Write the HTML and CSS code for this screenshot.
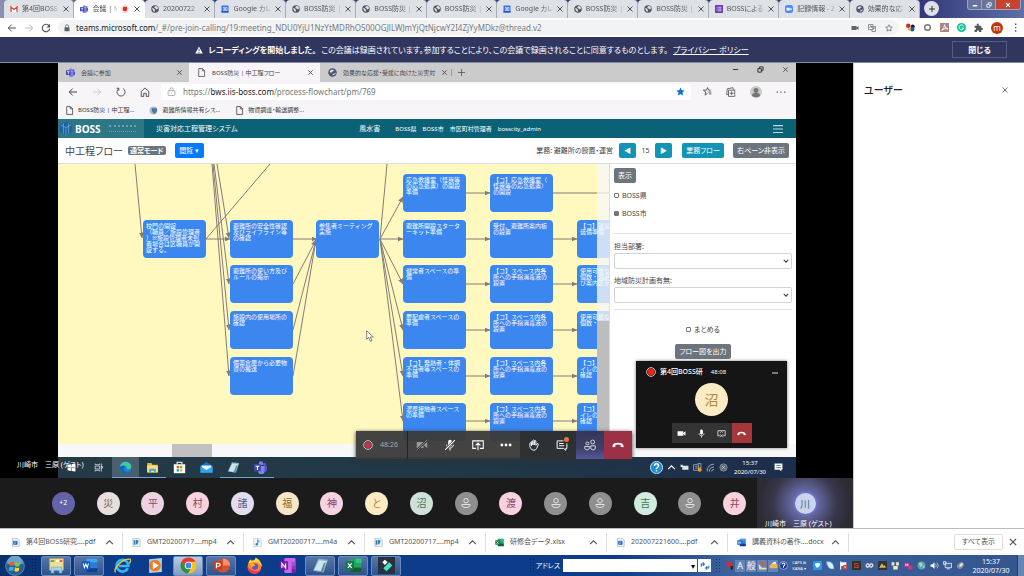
FILE: index.html
```html
<!DOCTYPE html>
<html lang="ja">
<head>
<meta charset="utf-8">
<title>会議 | Microsoft Teams</title>
<link rel="stylesheet" href="styles.css">
</head>
<body>
<svg class="defs" aria-hidden="true">
  <symbol id="x" viewBox="0 0 8 8"><path d="M1.500 1.500l5 5m0-5l-5 5" stroke="currentColor" fill="none"/></symbol>
  <symbol id="globe" viewBox="0 0 16 16"><circle cx="8" cy="8" r="7.500" fill="#54585d"/><path d="M2 6l4 1 2 3-1 4-3-3zM9 2l4 1 1 4-3 2-3-3-2-1z" fill="#dee1e6"/></symbol>
  <symbol id="gmail" viewBox="0 0 16 16"><path fill="#fff" d="M1 3h14v11H1z"/><path d="M2 14V4l6 5 6-5v10" fill="none" stroke="#d5473c" stroke-width="2.600"/></symbol>
  <symbol id="teams" viewBox="0 0 16 16"><circle cx="13" cy="4" r="2" fill="#5059c9"/><circle cx="8.500" cy="3" r="2.600" fill="#7b83eb"/><path d="M11 6h5v5a3 3 0 0 1-4 2z" fill="#5059c9"/><path d="M5 6h8v6a4 4 0 0 1-8 1z" fill="#7b83eb"/><rect y="4" width="8.500" height="8.500" rx="1" fill="#4349a8"/><path d="M2 6.500h4.500M4.250 6.500v4.500" stroke="#fff" stroke-width="1.300"/></symbol>
  <symbol id="cal" viewBox="0 0 16 16"><rect x="1" y="1" width="14" height="14" fill="#3b73e0"/><path d="M1 12h14v3H1z" fill="#1d57c5"/><path d="M4 5h3v6H4m0-3h3M9 5h3v6H9z" stroke="#fff" fill="none" stroke-width="1.200"/></symbol>
  <symbol id="form" viewBox="0 0 16 16"><rect width="16" height="16" rx="1.500" fill="#673ab7"/><path d="M3 4.500h2M3 8h2M3 11.500h2M6.500 4.500H13M6.500 8H13M6.500 11.500H13" stroke="#fff" stroke-width="1.500"/></symbol>
  <symbol id="zoom" viewBox="0 0 16 16"><rect width="16" height="16" rx="5" fill="#4a8cff"/><path d="M3 5.500h6.500V11H3zM10 7.500l3-2V11l-3-2z" fill="#fff"/></symbol>
  <symbol id="planet" viewBox="0 0 16 16"><circle cx="8" cy="8" r="7.500" fill="#4d556f"/><path d="M3 6c3-4 6-3 9-2-2 1-4 1-5 4-2 0-3 0-4-2zM8 11c2 0 4-2 6-3-1 3-3 5-6 5z" fill="#e4e7ef"/></symbol>
  <symbol id="rec" viewBox="0 0 16 16"><circle cx="8" cy="8" r="7" fill="none" stroke="#efa19b"/><circle cx="8" cy="8" r="4.800" fill="#d93025"/></symbol>
  <symbol id="back" viewBox="0 0 16 16"><path d="M14.500 8H2m5.500-5.500L2 8l5.500 5.500" fill="none" stroke="currentColor" stroke-width="1.600"/></symbol>
  <symbol id="fwd" viewBox="0 0 16 16"><path d="M1.500 8H14M8.500 2.500L14 8l-5.500 5.500" fill="none" stroke="currentColor" stroke-width="1.600"/></symbol>
  <symbol id="reload" viewBox="0 0 16 16"><path d="M13 4.500A6 6 0 1 0 14 9" fill="none" stroke="currentColor" stroke-width="1.800"/><path d="M14.500 1v6h-6z" fill="currentColor"/></symbol>
  <symbol id="lock" viewBox="0 0 16 16"><rect x="3" y="6.500" width="10" height="8" rx="1" fill="currentColor"/><path d="M5 7V4.500a3 3 0 0 1 6 0V7" fill="none" stroke="currentColor" stroke-width="1.600"/></symbol>
  <symbol id="lockline" viewBox="0 0 16 16"><rect x="2" y="6.500" width="12" height="8.500" rx="1" fill="none" stroke="currentColor"/><path d="M5 6.500V4.500a3 3 0 0 1 6 0v2M8 10v1.500" fill="none" stroke="currentColor"/></symbol>
  <symbol id="cam" viewBox="0 0 16 16"><path d="M1 4h10v8H1zM11 7l4-3v8l-4-3z" fill="currentColor"/></symbol>
  <symbol id="camoff" viewBox="0 0 16 16"><path d="M1 4h9v8H1zM11 7l4-3v8l-4-3z" fill="currentColor"/><path d="M1 15L15 1" stroke="#3b3b3b" stroke-width="3"/><path d="M1 15L15 1" stroke="currentColor"/></symbol>
  <symbol id="mic" viewBox="0 0 16 16"><rect x="5.500" y="1" width="5" height="9" rx="2.500" fill="currentColor"/><path d="M3.500 7.500c0 6 9 6 9 0M8 12v3.500" fill="none" stroke="currentColor" stroke-width="1.200"/></symbol>
  <symbol id="micoff" viewBox="0 0 16 16"><rect x="5.500" y="1" width="5" height="9" rx="2.500" fill="currentColor"/><path d="M3.500 7.500c0 6 9 6 9 0M8 12v3.500" fill="none" stroke="currentColor" stroke-width="1.200"/><path d="M1.500 14.500l13-13" stroke="#3b3b3b" stroke-width="3"/><path d="M1.500 14.500l13-13" stroke="currentColor" stroke-width="1.400"/></symbol>
  <symbol id="share" viewBox="0 0 16 16"><path d="M5.500 12.500H1v-10h14v10h-4.500M8 15V6M4.800 8.500L8 5.300l3.200 3.200" fill="none" stroke="currentColor" stroke-width="1.400"/></symbol>
  <symbol id="unshare" viewBox="0 0 16 16"><path d="M5 12H1.500V3h13v9H11M5.500 9.500l5 5m0-5l-5 5M6 6.500l2-2 2 2" fill="none" stroke="currentColor" stroke-width="1.300"/></symbol>
  <symbol id="more" viewBox="0 0 16 16"><circle cx="2.500" cy="8" r="1.900" fill="currentColor"/><circle cx="8" cy="8" r="1.900" fill="currentColor"/><circle cx="13.500" cy="8" r="1.900" fill="currentColor"/></symbol>
  <symbol id="hand" viewBox="0 0 16 16"><path d="M4.500 9V3.500q1-1.300 2 0V8 2q1-1.300 2 0v6-5.500q1-1.300 2 0V8.500l1.500-2q1.500-1 2 .5l-2.500 5.500Q10.500 15 8 15q-4 0-5.500-4.500V5.500q1-1.200 2 0z" fill="none" stroke="currentColor" stroke-width="1.200"/></symbol>
  <symbol id="chat" viewBox="0 0 16 16"><path d="M14.500 6v6.500H13V15l-3-2.500H1.500v-10H10M4 6h6M4 9h7" fill="none" stroke="currentColor" stroke-width="1.300"/></symbol>
  <symbol id="people" viewBox="0 0 16 16"><circle cx="4.500" cy="6" r="2" fill="none" stroke="currentColor"/><circle cx="11.500" cy="4" r="2.600" fill="none" stroke="currentColor"/><path d="M1 10h6v3q-3 3.500-6 0zM9 9h6v4q-3 3.500-6 0z" fill="none" stroke="currentColor"/></symbol>
  <symbol id="hang" viewBox="0 0 16 16"><path d="M.5 9.500Q1 5 8 5t7.500 4.500q0 1.500-1 1.500l-3-.8V8q-3.500-1.200-7 0v2.200l-3 .8q-1 0-1-1.500z" fill="currentColor"/></symbol>
  <symbol id="user" viewBox="0 0 16 16"><circle cx="8" cy="5" r="3" fill="none" stroke="currentColor" stroke-width="1.300"/><path d="M2.500 10h11q0 4-5.500 4t-5.500-4z" fill="none" stroke="currentColor" stroke-width="1.300"/></symbol>
  <symbol id="file" viewBox="0 0 16 16"><path d="M3 1h6.500L13.500 5v10H3zM9.500 1v4h4" fill="none" stroke="currentColor" stroke-width="1.300"/></symbol>
  <symbol id="star" viewBox="0 0 16 16"><path d="M8 .8l2.200 4.900 5.300.5-4 3.600 1.200 5.300L8 12.300l-4.700 2.800 1.200-5.300-4-3.600 5.300-.5z" fill="currentColor"/></symbol>
  <symbol id="starline" viewBox="0 0 16 16"><path d="M8 1.500l1.900 4.300 4.700.5-3.500 3.200 1 4.600L8 11.700l-4.100 2.400 1-4.600-3.500-3.200 4.700-.5z" fill="none" stroke="currentColor" stroke-width="1.400"/></symbol>
  <symbol id="up" viewBox="0 0 8 8"><path d="M1 5.500l3-3 3 3" fill="none" stroke="currentColor"/></symbol>
  <symbol id="down" viewBox="0 0 8 8"><path d="M1 2.500l3 3 3-3" fill="none" stroke="currentColor" stroke-width="1.500"/></symbol>
  <symbol id="doc" viewBox="0 0 16 16"><path d="M2.500.5H11L14.500 4v11.500h-12z" fill="#f3f8fc" stroke="#8a9bab"/><rect x="4" y="5" width="7.500" height="7" fill="#185abd"/><path d="M5.500 7h4.500M5.500 9.500h3" stroke="#fff"/></symbol>
  <symbol id="video" viewBox="0 0 16 16"><path d="M1.500.5H12L14.500 3v12.500h-13z" fill="#e9f2f9" stroke="#8fa9bd"/><path d="M3 4h3v8H3zM7 3l5 2-3 7-2-2z" fill="#3479a7"/></symbol>
  <symbol id="audio" viewBox="0 0 16 16"><path d="M1.500.5H12L14.500 3v12.500h-13z" fill="#f4f8fc" stroke="#9fb3c3"/><path d="M8.500 3v7.500M8.500 3q0 2.500 3 3.500" stroke="#1687d9" stroke-width="1.600" fill="none"/><circle cx="6.700" cy="11" r="2.200" fill="#1687d9"/></symbol>
  <symbol id="word" viewBox="0 0 32 32"><rect x="10" y="3" width="21" height="26" rx="2" fill="#2b7cd3"/><path d="M10 3h21v7H10z" fill="#41a5ee"/><path d="M10 21h21v8H10z" fill="#103f91"/><rect x="1" y="8" width="16" height="16" rx="1.500" fill="#185abd"/><path d="M4 12l2.300 8L9 13l2.700 7L14 12" fill="none" stroke="#fff" stroke-width="2"/></symbol>
  <symbol id="excel" viewBox="0 0 32 32"><rect x="10" y="3" width="21" height="26" rx="2" fill="#21a366"/><path d="M20 3h11v8H20z" fill="#33c481"/><path d="M10 20h21v9H10z" fill="#185c37"/><rect x="1" y="8" width="16" height="16" rx="1.500" fill="#107c41"/><path d="M5.500 12l7 8.500m0-8.500l-7 8.500" fill="none" stroke="#fff" stroke-width="2.200"/></symbol>
  <symbol id="ppt" viewBox="0 0 32 32"><circle cx="19" cy="16" r="13" fill="#d35230"/><path d="M19 3a13 13 0 0 1 13 13H19z" fill="#ff8f6b"/><rect x="1" y="8" width="16" height="16" rx="1.500" fill="#c43e1c"/><path d="M6.500 21v-9h4q3 0 3 2.700t-3 2.700h-4" fill="none" stroke="#fff" stroke-width="2.200"/></symbol>
  <symbol id="onenote" viewBox="0 0 32 32"><rect x="10" y="2" width="21" height="28" rx="2" fill="#ca64ea"/><path d="M24 9h7v7h-7z" fill="#ae4bd5"/><path d="M24 16h7v7h-7z" fill="#9332bf"/><path d="M24 23h7v7h-7z" fill="#7719aa"/><rect x="1" y="8" width="16" height="16" rx="1.500" fill="#7719aa"/><path d="M5.500 20.500V12l7 8.500V12" fill="none" stroke="#fff" stroke-width="2.200"/></symbol>
  <symbol id="notepad" viewBox="0 0 32 32"><path d="M12 3l18 2-8 24L2 26z" fill="#7fb2c3"/><path d="M13 6l15 1.500L20 27 4 24.500z" fill="#c9e6ee"/><path d="M22 12l4-3-5 18-5 1z" fill="#5f8795"/></symbol>
  <symbol id="folder" viewBox="0 0 32 32"><path d="M3 5h10l3 4h13v19H3z" fill="#e8b648"/><path d="M3 11h26v17H3z" fill="#ffdf7e"/><path d="M8 28v-9h16v9h-4v-4h-8v4z" fill="#4aa0dc"/></symbol>
  <symbol id="explorer7" viewBox="0 0 32 32"><path d="M3 3h26v22H3z" fill="#f1dc91" stroke="#cdaa4d"/><path d="M5 6h7v3H5z" fill="#37a44c"/><path d="M15 6h6v3h-6z" fill="#fff"/><path d="M22 6h5v3h-5z" fill="#d54a3d"/><path d="M6 30V19h20v11h-5v-5H11v5z" fill="#9ed5ef" stroke="#5aa4ca"/></symbol>
  <symbol id="chrome" viewBox="0 0 32 32"><circle cx="16" cy="16" r="15" fill="#fbc116"/><path d="M3 8.500A15 15 0 0 1 29.500 9H16l-6 10z" fill="#e33b2e"/><path d="M3 8.500A15 15 0 0 0 15 31l7-12-12 0z" fill="#229342"/><circle cx="16" cy="16" r="7" fill="#fff"/><circle cx="16" cy="16" r="5.500" fill="#4285f4"/></symbol>
  <symbol id="ie" viewBox="0 0 32 32"><path d="M26 21a11 11 0 1 1 1-4H9" fill="none" stroke="#35b4ee" stroke-width="5"/><path d="M3 29C-2 22 15 3 30 4q3 2-1 8" fill="none" stroke="#f6c632" stroke-width="2.500"/></symbol>
  <symbol id="wmp" viewBox="0 0 32 32"><path d="M4 4l24-2v26l-24 2z" fill="#a9d3ea"/><circle cx="15" cy="16" r="11" fill="#ef7b22"/><path d="M11 9l11 7-11 7z" fill="#fff"/></symbol>
  <symbol id="firefox" viewBox="0 0 32 32"><circle cx="16" cy="18" r="13" fill="#ff8a16"/><path d="M4 12q3-6 4-8 2 4 5 4 5-3 5-7 12 6 12 18-5-10-14-9z" fill="#ffd23c"/><path d="M3 18a13 13 0 0 0 26 2q-4 7-12 6Q7 25 3 18z" fill="#f5365c"/><circle cx="17" cy="18" r="6" fill="#6b4bd6"/><path d="M8 13q6-3 10 3-4 1-8 4z" fill="#ffab1f"/></symbol>
  <symbol id="filmora" viewBox="0 0 32 32"><rect width="32" height="32" fill="#26323f"/><path d="M8 10l5-5 5 5-5 5z" fill="#fff"/><path d="M10 21L21 10l6 6-11 11z" fill="#4fe0c1"/></symbol>
  <symbol id="edge" viewBox="0 0 32 32"><circle cx="16" cy="16" r="14.500" fill="#1683d1"/><path d="M2 15C4 4 14 0 22 3q9 4 8.500 12-1 6-8 6-5 0-4-4 1-5-5-5-7 0-11.500 3z" fill="#43c7a0"/><path d="M2 15q6-6 13-3-5 3-4 9 2 7 13 7Q14 34 6 26q-4-5-4-11z" fill="#0e63b5"/></symbol>
  <symbol id="store" viewBox="0 0 32 32"><path d="M2 8h28v22H2z" fill="#fff"/><path d="M10 8V3h12v5" fill="none" stroke="#fff" stroke-width="2.500"/><path d="M9 12h6v6H9z" fill="#f25022"/><path d="M17 12h6v6h-6z" fill="#7fba00"/><path d="M9 20h6v6H9z" fill="#00a4ef"/><path d="M17 20h6v6h-6z" fill="#ffb900"/></symbol>
  <symbol id="mail" viewBox="0 0 32 32"><path d="M1 12L16 2l15 10v17H1z" fill="#1272c4"/><path d="M4 11h24v8l-12 4-12-4z" fill="#e9f5fd"/><path d="M1 13l15 9 15-9v16H1z" fill="#2fa6ea"/></symbol>
  <symbol id="win" viewBox="0 0 16 16"><path d="M1 3l6-1v5.500H1zM8 2l7-1v6.500H8zM1 8.500h6V14l-6-1zM8 8.500h7V15l-7-1z" fill="currentColor"/></symbol>
  <symbol id="tasks" viewBox="0 0 16 16"><path d="M2 1v2h8V1M2 15v-2h8v2M2 5.500h8v5H2zM13 1v14M13 6h2v3h-2" fill="none" stroke="currentColor" stroke-width="1.200"/></symbol>
</svg>

<header class="tabstrip">
  <nav class="tabs" aria-label="タブ">
    <div class="tab"><svg><use href="#gmail"/></svg><span>第4回BOSS</span><button aria-label="閉じる"><svg><use href="#x"/></svg></button></div>
    <div class="tab tab-on"><svg><use href="#teams"/></svg><span>会議 | M</span><svg><use href="#rec"/></svg><button aria-label="閉じる"><svg><use href="#x"/></svg></button></div>
    <div class="tab"><svg><use href="#globe"/></svg><span>20200722</span><button aria-label="閉じる"><svg><use href="#x"/></svg></button></div>
    <div class="tab"><svg><use href="#cal"/></svg><span>Google カレ</span><button aria-label="閉じる"><svg><use href="#x"/></svg></button></div>
    <div class="tab"><svg><use href="#globe"/></svg><span>BOSS防災 |</span><button aria-label="閉じる"><svg><use href="#x"/></svg></button></div>
    <div class="tab"><svg><use href="#globe"/></svg><span>BOSS防災 |</span><button aria-label="閉じる"><svg><use href="#x"/></svg></button></div>
    <div class="tab"><svg><use href="#globe"/></svg><span>BOSS防災 |</span><button aria-label="閉じる"><svg><use href="#x"/></svg></button></div>
    <div class="tab"><svg><use href="#cal"/></svg><span>Google カレ</span><button aria-label="閉じる"><svg><use href="#x"/></svg></button></div>
    <div class="tab"><svg><use href="#globe"/></svg><span>BOSS防災 |</span><button aria-label="閉じる"><svg><use href="#x"/></svg></button></div>
    <div class="tab"><svg><use href="#globe"/></svg><span>BOSS防災 |</span><button aria-label="閉じる"><svg><use href="#x"/></svg></button></div>
    <div class="tab"><svg><use href="#form"/></svg><span>BOSSによる</span><button aria-label="閉じる"><svg><use href="#x"/></svg></button></div>
    <div class="tab"><svg><use href="#zoom"/></svg><span>記録情報 - Z</span><button aria-label="閉じる"><svg><use href="#x"/></svg></button></div>
    <div class="tab"><svg><use href="#planet"/></svg><span>効果的な応</span><button aria-label="閉じる"><svg><use href="#x"/></svg></button></div>
  </nav>
  <button class="newtab" aria-label="新しいタブ"><svg viewBox="0 0 8 8"><path d="M4 1v6M1 4h6" stroke="#333"/></svg></button>
  <div class="winctl">
    <button aria-label="最小化"><svg viewBox="0 0 8 8"><path d="M1 5h6" stroke="#fff" stroke-width="2"/></svg></button>
    <button aria-label="元に戻す"><svg viewBox="0 0 8 8"><path d="M1 3h4v4H1zM3 3V1h4v4H5" fill="none" stroke="#fff"/></svg></button>
    <button class="winclose" aria-label="閉じる"><svg viewBox="0 0 8 8"><path d="M1.500 1.500l5 5m0-5l-5 5" stroke="#fff" stroke-width="1.600"/></svg></button>
  </div>
</header>

<div class="toolbar">
  <button aria-label="戻る"><svg><use href="#back"/></svg></button>
  <button class="dim" aria-label="進む"><svg><use href="#fwd"/></svg></button>
  <button aria-label="再読み込み"><svg><use href="#reload"/></svg></button>
  <div class="omnibox">
    <svg><use href="#lock"/></svg>
    <a class="url" href="#"><b>teams.microsoft.com</b>/_#/pre-join-calling/19:meeting_NDU0YjU1NzYtMDRhOS00OGJlLWJmYjQtNjcwY2I4ZjYyMDkz@thread.v2</a>
    <div class="acts">
      <svg><use href="#cam"/></svg>
      <svg viewBox="0 0 16 16"><path d="M1 1h9v10H1zM6 5h9v10H8l-2-3M3 8l2.500-5L8 8M9 8h5m-2.500 0q0 3-3 4" fill="none" stroke="#666" stroke-width="1.300"/></svg>
      <svg><use href="#starline"/></svg>
    </div>
  </div>
  <div class="exts">
    <svg viewBox="0 0 16 16"><circle cx="4" cy="5" r="4" fill="#cc2e24"/><circle cx="12" cy="6" r="3.500" fill="#222"/><circle cx="11" cy="11" r="4" fill="#2358a6"/><circle cx="6" cy="11" r="2.500" fill="#e8b32c"/></svg>
    <svg viewBox="0 0 16 16"><circle cx="8" cy="8" r="5" fill="#fff" stroke="#777" stroke-width="2.500"/></svg>
    <svg viewBox="0 0 16 16"><rect width="16" height="16" fill="#a98583"/><path d="M3 13Q8 9 8 3q1 7 6 7-6-1-11 3z" fill="none" stroke="#fff" stroke-width="1.500"/></svg>
    <svg viewBox="0 0 16 16"><circle cx="8" cy="8" r="8" fill="#15c39a"/><path d="M11.500 5.500A4.200 4.200 0 1 0 12 9H8.500" fill="none" stroke="#fff" stroke-width="1.700"/></svg>
    <svg viewBox="0 0 16 16"><path d="M1 5h4q-1-4 1.500-4T8.500 5H13v4q3-1 3 1.500T13 12v4H9q0-3-2-3t-2 3H1v-4q3 0 3-1.800T1 8.500z" fill="#54585d"/></svg>
    <span class="me">m</span>
    <svg viewBox="0 0 16 16"><path d="M7 1h2.500v2.500H7zM7 7h2.500v2.500H7zM7 13h2.500v2.500H7z" fill="#555"/></svg>
  </div>
</div>

<div class="notice">
  <p><svg viewBox="0 0 16 16"><path d="M8 1l7.500 14H.5z" fill="#fff"/><path d="M8 5.500v5m0 1.500v2" stroke="#30365e" stroke-width="1.700"/></svg><b>レコーディングを開始しました。</b> <span>この会議は録画されています。参加することにより、この会議で録画されることに同意するものとします。</span> <a href="#">プライバシー ポリシー</a></p>
  <button>閉じる</button>
</div>

<main class="main">
  <section class="meeting">
    <div class="stage">
      <div class="screen">
        <div class="etabs">
          <div class="etab"><svg><use href="#teams"/></svg><span>会議に参加</span><svg class="s7"><use href="#x"/></svg></div>
          <div class="etab etab-on"><svg><use href="#file"/></svg><span>BOSS防災 | 中工程フロー</span><svg class="s7"><use href="#x"/></svg></div>
          <div class="etab"><svg><use href="#planet"/></svg><span>効果的な応援・受援に向けた災害対</span><svg class="s7"><use href="#x"/></svg></div>
          <button class="eplus" aria-label="新しいタブ"><svg viewBox="0 0 8 8"><path d="M4 0v8M0 4h8" stroke="#444" stroke-width=".8"/></svg></button>
          <div class="ewin">
            <svg viewBox="0 0 8 8"><path d="M1 4h6" stroke="#222"/></svg>
            <svg viewBox="0 0 8 8"><path d="M1 3h4v4H1zM3 3V1h4v4H5" fill="none" stroke="#222"/></svg>
            <svg><use href="#x"/></svg>
          </div>
        </div>
        <div class="eaddr">
          <div class="enav">
            <svg><use href="#back"/></svg>
            <svg class="dim"><use href="#fwd"/></svg>
            <svg viewBox="0 0 16 16"><path d="M4.500 2.500a6.500 6.500 0 1 0 7 0M4.500 6V2H.8" fill="none" stroke="#444" stroke-width="1.400"/></svg>
            <svg viewBox="0 0 16 16"><path d="M2 7l6-5.500L14 7v8h-4v-5H6v5H2z" fill="none" stroke="#444" stroke-width="1.400"/></svg>
          </div>
          <div class="ebox"><svg><use href="#lockline"/></svg><span>https://<b>bws.iis-boss.com</b>/process-flowchart/pm/769</span><svg class="fav"><use href="#star"/></svg></div>
          <div class="eacts">
            <svg viewBox="0 0 16 16"><path d="M9 10l-4 3 1-5-4-3h5l2-4 1.500 4H14M10 8h5M11 11h4" fill="none" stroke="#444" stroke-width="1.300"/></svg>
            <svg viewBox="0 0 16 16"><path d="M4 5h10v10H4zM4 12H1l1-9 9-2 1 4M9 7v6M6 10h6" fill="none" stroke="#444" stroke-width="1.200"/></svg>
            <svg class="s12" viewBox="0 0 16 16"><circle cx="8" cy="8" r="8" fill="#c9c9c9"/><circle cx="8" cy="6" r="3.200" fill="#777"/><path d="M2.500 13q0-4 5.500-4t5.500 4q-5 4-11 0z" fill="#777"/></svg>
            <svg viewBox="0 0 16 16"><path d="M1 7h2v2H1zM7 7h2v2H7zM13 7h2v2h-2z" fill="#555"/></svg>
          </div>
        </div>
        <div class="ebook">
          <a href="#"><svg><use href="#file"/></svg>BOSS防災 | 中工程...</a>
          <a href="#"><svg viewBox="0 0 16 16"><circle cx="8" cy="8" r="7" fill="#b5bcc6"/><path d="M5 4h9v5q-2 4-5 5-3-3-4-5z" fill="#4978a8"/></svg>避難所情報共有シス...</a>
          <a href="#"><svg><use href="#file"/></svg>物資調達・輸送調整...</a>
        </div>

        <div class="bnav">
          <div class="logo"><svg viewBox="0 0 16 18"><path d="M1 4l7-3 7 3v9l-7 4-7-4z" fill="#235f9c"/><path d="M2 5l6 3 6-3M8 8v9M5 3v12M11 3v12" fill="none" stroke="#79b5dc" stroke-width=".8"/></svg><b>BOSS</b><i></i></div>
          <span class="sys">災害対応工程管理システム</span>
          <span class="dis">風水害</span>
          <span>BOSS県</span><span>BOSS市</span><span>市区町村管理者</span><span>bosscity_admin</span>
          <button aria-label="メニュー"><svg viewBox="0 0 16 16"><path d="M0 2.500h16M0 8h16M0 13.500h16" stroke="#b9dce2" stroke-width="1.800"/></svg></button>
        </div>
        <div class="bhead">
          <h1>中工程フロー</h1><span class="mode">通常モード</span><button class="btn blue">閲覧 ▾</button>
          <span class="task">業務: 避難所の設置・運営</span>
          <button class="btn teal sq" aria-label="前へ">◀</button><span class="num">15</span><button class="btn teal sq" aria-label="次へ">▶</button>
          <button class="btn teal flow">業務フロー</button><button class="btn grey">右ペーン非表示</button>
        </div>

        <div class="work">
          <div class="canvas">
            <svg class="edges" viewBox="0 0 552 281">
              <defs><marker id="a" viewBox="0 0 6 6" refX="5.500" refY="3" markerWidth="6" markerHeight="6" orient="auto"><path d="M0 .5L6 3 0 5.500z" fill="#857b76"/></marker></defs>
              <g class="arrows">
                <path d="M77 0L84 74"/><path d="M148 75H172"/>
                <path d="M159 0L171 74"/><path d="M156 0L171 120"/><path d="M155 0L171 166"/><path d="M154 0L171 212"/>
                <path d="M235 75H259"/><path d="M235 120L258 76"/><path d="M235 166L258 76"/><path d="M235 212L258 76"/>
                <path d="M322 75L345 33"/><path d="M322 75H345"/><path d="M322 75L345 120"/><path d="M322 75L345 166"/><path d="M322 75L345 212"/><path d="M322 75L345 257"/>
                <path d="M408 29H432"/><path d="M408 75H432"/><path d="M408 120H432"/><path d="M408 166H432"/><path d="M408 212H432"/><path d="M408 257H432"/>
                <path d="M495 75H519"/><path d="M495 120H519"/><path d="M495 166H519"/><path d="M495 212H519"/><path d="M495 257H519"/>
              </g>
              <path d="M148 75L212 0M322 75L329 0M495 29H552"/>
            </svg>
            <div class="node c1 r2">校門の開錠<br>（職員／施設管理者<br>）※施設管理者未到<br>着場合は区職員が開<br>錠する。</div>
            <div class="node c2 r2">避難所の安全性確認<br>及びライフライン等<br>の確認</div>
            <div class="node c2 r3">避難所の使い方及び<br>ルールの掲示</div>
            <div class="node c2 r4">施設内の使用場所の<br>確認</div>
            <div class="node c2 r5">備蓄倉庫から必要物<br>資の搬送</div>
            <div class="node c3 r2">参集者ミーティング<br>実施</div>
            <div class="node c4 r1">応急救護室（怪我等<br>の応急処置）の開設<br>準備</div>
            <div class="node c4 r2">避難所開設スタータ<br>ーキット準備</div>
            <div class="node c4 r3">健常者スペースの準<br>備</div>
            <div class="node c4 r4">要配慮者スペースの<br>準備</div>
            <div class="node c4 r5">【コ】発熱者・体調<br>不良者等スペースの<br>準備</div>
            <div class="node c4 r6">濃厚接触者スペース<br>の準備</div>
            <div class="node c5 r1">【コ】応急救護室（<br>怪我等の応急処置）<br>の開設</div>
            <div class="node c5 r2">受付、避難所案内板<br>の設置</div>
            <div class="node c5 r3">【コ】スペース内各<br>所への手指消毒液の<br>設置</div>
            <div class="node c5 r4">【コ】スペース内各<br>所への手指消毒液の<br>設置</div>
            <div class="node c5 r5">【コ】スペース内各<br>所への手指消毒液の<br>設置</div>
            <div class="node c5 r6">【コ】スペース内各<br>所への手指消毒液の<br>設置</div>
            <div class="node c6 r2">【コ】運営<br>装備準備</div>
            <div class="node c6 r3">使用可能な<br>個数・備品<br>び案内表示</div>
            <div class="node c6 r4">使用可能な<br>個数・</div>
            <div class="node c6 r5">【コ】<br>イレの<br>確認</div>
            <div class="node c6 r6">【コ】<br>イレの<br>確認</div>
            <div class="veil"></div>
            <svg class="cursor" viewBox="0 0 12 18"><path d="M1 1v13l3-3 2.500 6 2.500-1-2.500-5.500H11z" fill="#fff" stroke="#444"/></svg>
          </div>
          <aside class="pane">
            <button class="btn grey show">表示</button>
            <label class="chk"><input type="checkbox">BOSS県</label>
            <label class="chk"><input type="checkbox" checked>BOSS市</label>
            <hr>
            <label for="dept">担当部署:</label>
            <div class="pick"><select id="dept"><option></option></select><svg><use href="#down"/></svg></div>
            <label for="plan">地域防災計画有無:</label>
            <div class="pick"><select id="plan"><option></option></select><svg><use href="#down"/></svg></div>
            <hr class="last">
            <label class="chk sum"><input type="checkbox">まとめる</label>
            <button class="btn grey out">フロー図を出力</button>
          </aside>
        </div>
        <div class="hscroll"><i></i></div>

        <div class="bar10">
          <span class="app"><svg class="s9"><use href="#win"/></svg></span>
          <span class="app"><svg class="s9"><use href="#tasks"/></svg></span>
          <span class="app run lit"><svg><use href="#edge"/></svg></span>
          <span class="app run"><svg><use href="#folder"/></svg></span>
          <span class="app"><svg><use href="#store"/></svg></span>
          <span class="app"><svg><use href="#mail"/></svg></span>
          <span class="app run"><svg><use href="#notepad"/></svg></span>
          <span class="app run"><svg><use href="#teams"/></svg></span>
          <div class="tray10">
            <svg class="s12" viewBox="0 0 16 16"><circle cx="8" cy="8" r="7.500" fill="#1a8fd8" stroke="#e6f5fd"/><path d="M5.500 6q0-2.500 2.500-2.500T10.500 6Q10.500 7 8 9v1m0 1.500v1.500" fill="none" stroke="#fff" stroke-width="1.800"/></svg>
            <svg class="s7"><use href="#up"/></svg>
            <svg viewBox="0 0 16 16"><path d="M4 5h11v7H4zM1 3h4v4H1z" fill="#dfe5ea"/></svg>
            <svg viewBox="0 0 16 16"><path d="M1 3h9v10H1zM8 1h6v8H8M4 6h4M4 9h4" fill="none" stroke="#dfe5ea"/><circle cx="12" cy="12" r="3.500" fill="#f39a1e"/></svg>
            <svg viewBox="0 0 16 16"><path d="M2 15Q2 3 14 2M6 15q0-7 8-8M10 15q0-3 4-4" fill="none" stroke="#b8c2cc" stroke-width="1.500"/></svg>
            <svg viewBox="0 0 16 16"><circle cx="8" cy="8" r="6.500" fill="#56616e" stroke="#aab4bf"/><path d="M5 5l6 6m0-6l-6 6" stroke="#dde3e8" stroke-width="1.300"/></svg>
            <time>15:37<br>2020/07/30</time>
            <svg viewBox="0 0 16 16"><path d="M1 1h14v11h-2v3l-3-3H1z" fill="#f4f6f8"/><path d="M4 4.500h8M4 8h8" stroke="#25344d"/></svg>
          </div>
        </div>

        <div class="mini">
          <div class="mtitle"><svg viewBox="0 0 16 16"><circle cx="8" cy="8" r="7" fill="none" stroke="#fff" stroke-width="1.200"/><circle cx="8" cy="8" r="5.500" fill="#ee2410"/></svg><b>第4回BOSS研</b><span>48:08</span><button aria-label="最小化"><svg viewBox="0 0 8 8"><path d="M1 5h6" stroke="#ddd"/></svg></button></div>
          <span class="ava big sand">沼</span>
          <div class="mctl">
            <button aria-label="カメラ"><svg><use href="#cam"/></svg></button>
            <button aria-label="マイク"><svg><use href="#mic"/></svg></button>
            <button aria-label="共有停止"><svg><use href="#unshare"/></svg></button>
            <button class="red" aria-label="退出"><svg><use href="#hang"/></svg></button>
          </div>
        </div>
      </div>

      <span class="who">川崎市　三原 (ゲスト)</span>
      <div class="callbar">
        <span class="time"><svg viewBox="0 0 16 16"><circle cx="8" cy="8" r="7" fill="none" stroke="#ddd" stroke-width="1.300"/><circle cx="8" cy="8" r="5" fill="#c4314b"/></svg>48:26</span>
        <button class="off" aria-label="カメラ"><svg><use href="#camoff"/></svg></button>
        <button aria-label="マイク"><svg><use href="#micoff"/></svg></button>
        <button aria-label="共有"><svg><use href="#share"/></svg></button>
        <button aria-label="その他"><svg><use href="#more"/></svg></button>
        <button class="deep" aria-label="手を挙げる"><svg><use href="#hand"/></svg></button>
        <button class="deep dot" aria-label="チャット"><svg><use href="#chat"/></svg></button>
        <button class="sel" aria-label="参加者"><svg><use href="#people"/></svg></button>
        <button class="red" aria-label="退出"><svg><use href="#hang"/></svg></button>
      </div>
    </div>

    <div class="roster">
      <ul>
        <li><span class="ava plus">+2</span></li>
        <li><span class="ava stone">災</span></li>
        <li><span class="ava mauve">平</span></li>
        <li><span class="ava pink">村</span></li>
        <li><span class="ava lilac">諸</span></li>
        <li><span class="ava tan">福</span></li>
        <li><span class="ava pink">神</span></li>
        <li><span class="ava sand">と</span></li>
        <li><span class="ava sage">沼</span></li>
        <li><span class="ava anon"><svg><use href="#user"/></svg></span></li>
        <li><span class="ava pink">渡</span></li>
        <li><span class="ava anon"><svg><use href="#user"/></svg></span></li>
        <li><span class="ava anon"><svg><use href="#user"/></svg></span></li>
        <li><span class="ava mint">吉</span></li>
        <li><span class="ava anon"><svg><use href="#user"/></svg></span></li>
        <li><span class="ava pink">井</span></li>
      </ul>
      <div class="self"><span class="ava sky">川</span><span class="selfname">川崎市　三原 (ゲスト)</span></div>
    </div>
  </section>
  <aside class="users"><h2>ユーザー</h2><button aria-label="閉じる"><svg><use href="#x"/></svg></button></aside>
</main>

<div class="downloads">
  <a class="dl" href="#"><svg><use href="#doc"/></svg><span>第４回BOSS研究….pdf</span><svg class="s7"><use href="#up"/></svg></a>
  <a class="dl" href="#"><svg><use href="#video"/></svg><span>GMT20200717….mp4</span><svg class="s7"><use href="#up"/></svg></a>
  <a class="dl" href="#"><svg><use href="#audio"/></svg><span>GMT20200717….m4a</span><svg class="s7"><use href="#up"/></svg></a>
  <a class="dl" href="#"><svg><use href="#video"/></svg><span>GMT20200717….mp4</span><svg class="s7"><use href="#up"/></svg></a>
  <a class="dl" href="#"><svg><use href="#excel"/></svg><span>研修会データ.xlsx</span><svg class="s7"><use href="#up"/></svg></a>
  <a class="dl" href="#"><svg><use href="#doc"/></svg><span>202007221600….pdf</span><svg class="s7"><use href="#up"/></svg></a>
  <a class="dl" href="#"><svg><use href="#word"/></svg><span>講義資料の著作….docx</span><svg class="s7"><use href="#up"/></svg></a>
  <button class="all">すべて表示</button>
  <button class="dlx" aria-label="閉じる"><svg><use href="#x"/></svg></button>
</div>

<footer class="bar7">
  <button class="start" aria-label="スタート"><svg viewBox="0 0 32 32"><circle cx="16" cy="16" r="15" fill="#22608f" stroke="#7fb1cf"/><path d="M3 12a13 13 0 0 1 26 0q-13 5-26 0z" fill="#6ba3c7"/><path d="M8 10q4-2 7 0l-1 6q-3-2-7 0z" fill="#f0592b"/><path d="M17 10q4 2 7 0l-1 6q-4 2-7 0z" fill="#8cc63f"/><path d="M7 18q4-2 7 0l-1 6q-3-2-7 0z" fill="#3fa9f5"/><path d="M16 18q4 2 7 0l-1 6q-4 2-7 0z" fill="#fcd22f"/></svg></button>
  <i class="grip"></i>
  <div class="apps7">
    <span class="open"><svg><use href="#explorer7"/></svg></span>
    <span class="open"><svg><use href="#word"/></svg></span>
    <span><svg><use href="#ie"/></svg></span>
    <span><svg><use href="#wmp"/></svg></span>
    <span class="open now"><svg><use href="#chrome"/></svg></span>
    <span class="open"><svg><use href="#ppt"/></svg></span>
    <span><svg><use href="#firefox"/></svg></span>
    <span><svg><use href="#onenote"/></svg></span>
    <span class="open"><svg><use href="#notepad"/></svg></span>
    <span class="open"><svg><use href="#excel"/></svg></span>
    <span class="open"><svg><use href="#filmora"/></svg></span>
  </div>
  <i class="grip"></i>
  <label class="addr" for="addr">アドレス</label>
  <div class="combo"><input id="addr" type="text"><i>▾</i></div>
  <button class="go" aria-label="更新"><svg viewBox="0 0 16 16"><path d="M2 9V5h5M4.500 2L7 5 4.500 8M14 7v4H9M11.500 8L9 11l2.500 3" fill="none" stroke="#2f7cc4" stroke-width="1.800"/></svg></button>
  <i class="grip"></i>
  <div class="ime">
    <svg viewBox="0 0 16 16"><circle cx="8" cy="6" r="5" fill="#df2c22"/><path d="M10 9h4v6h-4z" fill="#222"/></svg>
    <span class="key">A</span><span class="key">般</span>
    <span class="key"><svg viewBox="0 0 16 16"><path d="M1 5l6 7h8v3H2z" fill="#f5d9ae"/><path d="M2 1l8 8 4-5z" fill="#e2582c"/></svg></span>
    <span class="key"><svg viewBox="0 0 16 16"><path d="M1 7l7-3 7 2v7H1z" fill="#f0b64e"/><path d="M4 5l7-4 2 4z" fill="#fff"/></svg></span>
    <svg viewBox="0 0 16 16"><circle cx="8" cy="8" r="7" fill="#1c2f9f" stroke="#dfe6ff"/><path d="M5.500 6q0-2.500 2.500-2.500T10.500 6Q10.500 7 8 9v3" fill="none" stroke="#fff" stroke-width="1.800"/></svg>
    <span class="caps">CAPS ⧉<br>KANA ▾</span>
  </div>
  <div class="tray7">
    <svg viewBox="0 0 16 16"><rect width="16" height="16" rx="2" fill="#1f9cf0"/><path d="M3 5q5-3 10 0-1 6-6 7-3-2-4-7z" fill="#fff"/></svg>
    <svg viewBox="0 0 16 16"><path d="M1 1q13-1 13 13H8Q1 10 1 1z" fill="#d8f0fb" stroke="#3aa8dd"/></svg>
    <svg viewBox="0 0 16 16"><path d="M2 1h2v14H2zM4 2h9v7H4z" fill="#fff"/><circle cx="11" cy="11" r="4.500" fill="#d83a2e"/><path d="M9 9l4 4m0-4l-4 4" stroke="#fff"/></svg>
    <svg viewBox="0 0 16 16"><rect width="16" height="16" fill="#25352a"/><path d="M12 4.500H5v7h6V8H8" fill="none" stroke="#e0332a" stroke-width="2"/></svg>
    <svg viewBox="0 0 16 16"><path d="M2 8q3-6 6 0t6 0q-2-6-6 0T2 8z" fill="none" stroke="#d9dce0" stroke-width="2.500"/></svg>
    <svg viewBox="0 0 16 16"><rect width="16" height="16" fill="#333"/><path d="M2 12l5-8 3 5 2-2 2 5z" fill="#d9b65d"/></svg>
    <svg viewBox="0 0 16 16"><path d="M1 2h5v6H1zM9 2h5v6H9zM4 9h8v6H4z" fill="#f2e7b9"/></svg>
    <svg viewBox="0 0 16 16"><path d="M1 3h8v8H1zM7 8h8v7H7z" fill="#c7338b"/><path d="M3 9V5l2 3 2-3v4" stroke="#fff" fill="none"/></svg>
    <svg viewBox="0 0 16 16"><circle cx="8" cy="8" r="7" fill="#5f9fbd"/><path d="M3 4l5-2 2 5-4 4zM9 10l5-2-2 5z" fill="#a6e091"/></svg>
    <svg viewBox="0 0 16 16"><path d="M1 6h3l4-4v12l-4-4H1z" fill="#fff"/><path d="M10 5q2 3 0 6M12.500 3q4 5 0 10" fill="none" stroke="#fff"/></svg>
    <svg viewBox="0 0 16 16"><path d="M4 4h11v8H4zM7 14h5M1 1h4v5H1z" fill="#4a6799" stroke="#fff" stroke-width="1.300"/></svg>
    <svg viewBox="0 0 16 16"><ellipse cx="8" cy="8" rx="7" ry="5" transform="rotate(-45 8 8)" fill="#8a8f96"/><ellipse cx="9" cy="7" rx="4" ry="2" transform="rotate(-45 9 7)" fill="#e7eaee"/></svg>
  </div>
  <time>15:37<br>2020/07/30</time>
  <button class="desk" aria-label="デスクトップの表示"></button>
</footer>
</body>
</html>
```
FILE: styles.css
```css
* { box-sizing: border-box; }
html, body { margin: 0; }
body {
  display: flex; flex-direction: column; min-height: 100vh;
  font-family: "Noto Sans", "Noto Sans CJK JP", sans-serif;
  font-feature-settings: "palt"; font-size: 8px; line-height: 12px; color: #333;
}
button { font: inherit; color: inherit; border: 0; padding: 0; background: none; display: flex; align-items: center; justify-content: center; }
a { color: inherit; text-decoration: none; }
svg { display: block; flex: none; width: 10px; height: 10px; }
.defs { position: absolute; width: 0; height: 0; }
svg.s7 { width: 7px; height: 7px; }
svg.s9 { width: 9px; height: 9px; }
svg.s12 { width: 12px; height: 12px; }
.dim { color: #bbb; }

/* browser chrome */
.tabstrip { display: flex; height: 18px; padding-left: 4px; background: linear-gradient(90deg, #8d8fb4, #34397c 12%, #34397c 90%, #5d71a5); }
.tabs { display: flex; flex: 1; min-width: 0; }
.tab { display: flex; flex: 1; min-width: 0; align-items: center; gap: 4px; padding: 0 3px 0 6px; background: #dee1e6; border-right: 1px solid #a9adb5; border-radius: 4px 4px 0 0; font-size: 7px; color: #555; }
.tab > svg { width: 8px; height: 8px; }
.tab span { flex: 1; min-width: 0; white-space: nowrap; -webkit-mask-image: linear-gradient(90deg, #000 70%, rgba(0,0,0,.3)); mask-image: linear-gradient(90deg, #000 70%, rgba(0,0,0,.3)); }
.tab button svg { width: 8px; height: 8px; }
.tab-on { background: #fff; border-color: #fff; }
.newtab { width: 15px; height: 15px; margin: 1px 28px 0 4px; border-radius: 50%; background: #dee1e6; }
.newtab svg { width: 8px; height: 8px; }
.winctl { display: flex; height: 10px; margin-right: 3px; border: 1px solid #9aa3c0; border-top: 0; border-radius: 0 0 3px 3px; overflow: hidden; background: #68749b; }
.winctl button { width: 14px; border-right: 1px solid #9aa3c0; }
.winctl svg { width: 6px; height: 6px; }
.winctl .winclose { width: 24px; background: #c5432f; border: 0; }

.toolbar { display: flex; align-items: center; height: 19px; padding: 0 4px 0 7px; gap: 7px; background: #fff; color: #555; }
.omnibox { display: flex; flex: 1; min-width: 0; align-items: center; gap: 5px; height: 15px; padding: 0 6px 0 5px; border-radius: 8px; background: #f1f3f4; color: #5f6368; }
.omnibox svg { width: 8px; height: 8px; }
.acts { display: flex; gap: 9px; }
.url { flex: 1; min-width: 0; white-space: nowrap; color: #777b80; }
.url b { font-weight: 400; color: #202124; }
.exts { display: flex; align-items: center; gap: 8px; }
.exts svg { width: 9px; height: 9px; }
.me { width: 12px; height: 12px; border-radius: 50%; background: #bf360c; color: #fff; text-align: center; line-height: 11px; }

.notice { display: flex; align-items: center; height: 26px; padding-right: 17px; background: #30365e; color: #fff; border-bottom: 1px solid #8589a8; }
.notice p { display: flex; flex: 1; align-items: center; justify-content: center; gap: 5px; margin: 0; padding-right: 8px; white-space: nowrap; }
.notice p svg { width: 8px; height: 8px; }
.notice a { text-decoration: underline; }
.notice button { width: 55px; height: 17px; border: 1px solid #565c80; font-weight: 700; }

/* meeting */
.main { display: flex; flex: 1; }
.meeting { display: flex; flex: 1; min-width: 0; flex-direction: column; }
.stage { position: relative; display: flex; flex: 1; padding: 0 57px 0 58px; background: #000; }
.screen { position: relative; display: flex; flex: 1; min-width: 0; flex-direction: column; background: #fff; }
.users { display: flex; align-items: flex-start; justify-content: space-between; width: 171px; padding: 20px 15px 0 10px; background: #fff; border-left: 1px solid #ccc; color: #777; }
.users h2 { margin: 0; font-size: 10px; line-height: 14px; font-weight: 500; color: #222; }
.users button { height: 14px; }
.users svg { width: 8px; height: 8px; }

.etabs { display: flex; align-items: center; height: 19px; background: #cbcbcb; font-size: 6px; color: #444; }
.etab { display: flex; align-items: center; gap: 6px; width: 131px; height: 19px; padding: 0 6px 0 8px; }
.etab > svg:first-child { width: 9px; height: 9px; }
.etab span { flex: 1; white-space: nowrap; }
.etab-on { background: #f7f5f8; }
.eplus { padding: 0 0 0 6px; border-left: 1px solid #999; }
.eplus svg, .ewin svg { width: 7px; height: 7px; }
.ewin { display: flex; gap: 18px; margin-left: auto; padding: 0 7px 6px 0; }
.eaddr { display: flex; align-items: center; height: 19px; background: #f7f5f8; color: #444; }
.enav { display: flex; gap: 14px; padding: 0 11px 0 10px; }
.enav .dim { color: #ccc; }
.ebox { display: flex; flex: 1; align-items: center; gap: 7px; height: 16px; padding: 0 6px 0 6px; background: #fff; border-radius: 2px; color: #777; }
.ebox span { flex: 1; white-space: nowrap; }
.ebox b { font-weight: 400; color: #222; }
.ebox svg { width: 9px; height: 9px; }
.ebox .fav { color: #0f6fd0; }
.eacts { display: flex; align-items: center; gap: 14px; padding: 0 10px 0 11px; }
.ebook { display: flex; align-items: center; gap: 15px; height: 18px; padding-left: 7px; background: #f7f5f8; font-size: 6px; }
.ebook a { display: flex; align-items: center; gap: 4px; }
.ebook svg { width: 9px; height: 9px; }

.bnav { display: flex; align-items: center; height: 19px; gap: 6px; padding-right: 13px; background: #0b6277; color: #fff; font-size: 6px; }
.logo { display: flex; align-items: center; gap: 2px; width: 86px; height: 19px; padding-left: 1px; background: #2d7787; font-size: 10px; }
.logo svg { width: 14px; height: 17px; }
.logo i { width: 27px; height: 7px; margin-left: 6px; border-top: 2px dotted #6da1ac; border-bottom: 1px dotted #6da1ac; }
.sys { flex: 1; padding-left: 6px; font-size: 7px; }
.dis { padding-right: 9px; font-size: 7px; }
.bnav button { margin-left: 226px; }
.bhead { display: flex; align-items: center; height: 26px; padding: 0 7px; border-bottom: 1px solid #ddd; font-size: 7px; color: #444; }
.bhead h1 { margin: 0 5px 0 0; font-size: 10px; font-weight: 400; }
.mode { padding: 0 2px; margin-right: 9px; border-radius: 2px; background: #6c757d; color: #fff; line-height: 9px; font-weight: 700; }
.btn { height: 15px; padding: 0 4px; border-radius: 2px; color: #fff; font-size: 7px; white-space: nowrap; }
.blue { width: 29px; background: #007bff; }
.teal { background: #1294b5; }
.grey { background: #6c757d; }
.task { margin-left: auto; padding-right: 6px; }
.sq { width: 17px; padding: 0; }
.num { width: 19px; text-align: center; }
.flow { width: 42px; margin: 0 9px 0 10px; }

.work { display: flex; flex: 1; }
.canvas { position: relative; flex: 1; min-width: 0; overflow: hidden; background: #fff9c0; }
.edges { position: absolute; inset: 0; width: 552px; height: 281px; fill: none; stroke: #857b76; }
.edges marker path { stroke: none; }
.arrows path { marker-end: url(#a); }
.node { position: absolute; width: 63px; height: 38px; padding: 3px 3px; border-radius: 4px; background: #3b87ef; color: #fff; font-size: 6px; line-height: 6px; white-space: nowrap; font-feature-settings: normal; }
.c1 { left: 85px; } .c2 { left: 172px; } .c3 { left: 258px; } .c4 { left: 345px; } .c5 { left: 432px; } .c6 { left: 519px; }
.r1 { top: 10px; } .r2 { top: 56px; } .r3 { top: 101px; } .r4 { top: 147px; } .r5 { top: 193px; } .r6 { top: 239px; }
.veil { position: absolute; top: 0; right: 0; bottom: 0; width: 13px; background: linear-gradient(rgba(247,247,247,.78) 157px, #bdbdbd 157px); border-right: 1px solid #ddd; }
.cursor { position: absolute; left: 308px; top: 166px; width: 8px; height: 12px; }
.pane { width: 186px; padding: 4px 4px 0; font-size: 7px; color: #444; }
.pane label { display: flex; align-items: center; height: 13px; }
.pane .show { height: 15px; margin-bottom: 6px; }
.pane .chk { gap: 3px; margin-bottom: 5px; }
.chk input { appearance: none; width: 5px; height: 5px; margin: 0; border: 1px solid #777; border-radius: 1px; background: #fff; }
.chk input:checked { background: #777; }
.pane hr { height: 1px; margin: 13px 0 6px; border: 0; background: #e0e0e0; }
.pick { position: relative; margin-bottom: 5px; }
.pick select { display: block; appearance: none; width: 100%; height: 16px; border: 1px solid #ced4da; border-radius: 2px; background: #fff; font-size: 7px; }
.pick svg { position: absolute; right: 3px; top: 5px; width: 6px; height: 6px; pointer-events: none; }
.pane .last { margin: 6px 0 13px; }
.pane .sum { justify-content: center; margin-bottom: 8px; }
.out { margin: 0 auto; }
.hscroll { height: 13px; padding-left: 114px; background: #f8f8f8; }
.hscroll i { display: block; width: 40px; height: 13px; background: #c1c1c1; }

.bar10 { display: flex; height: 21px; background: linear-gradient(90deg, #243a47, #203746 60%, #1d2d4d); color: #fff; }
.app { display: flex; align-items: center; justify-content: center; width: 27px; border-bottom: 1px solid transparent; }
.app svg { width: 13px; height: 13px; }
.app svg.s9 { width: 9px; height: 9px; }
.run { border-bottom-color: #6ca4dc; }
.lit { background: #4a5f6d; }
.tray10 { display: flex; align-items: center; gap: 4px; margin-left: auto; padding-right: 13px; font-size: 6px; line-height: 9px; text-align: center; }
.tray10 svg { width: 9px; height: 9px; }
.tray10 .s12 { width: 13px; height: 13px; }
.tray10 time { padding: 0 4px 0 2px; }

.mini { position: absolute; right: 9px; bottom: 30px; display: flex; flex-direction: column; align-items: center; width: 151px; height: 87px; background: #151515; color: #fff; box-shadow: 0 0 3px #777; }
.mtitle { display: flex; align-items: center; align-self: stretch; height: 22px; padding: 0 8px 0 10px; gap: 4px; font-size: 7px; }
.mtitle b { font-weight: 500; }
.mtitle span { margin-left: 4px; font-size: 6px; }
.mtitle button { margin-left: auto; }
.mtitle button svg { width: 8px; height: 8px; }
.mctl { display: flex; height: 20px; margin-top: 7px; background: #333; }
.mctl button { width: 20px; }
.mctl svg { width: 9px; height: 9px; }
.red { background: #a4373a; }

.who { position: absolute; left: 17px; bottom: 7px; color: #fff; font-size: 7px; line-height: 12px; }
.callbar { position: absolute; left: 356px; bottom: 19px; display: flex; height: 28px; background: rgba(59,59,59,.96); color: #fff; box-shadow: 0 1px 4px #333; }
.callbar .time { display: flex; align-items: center; gap: 7px; width: 52px; padding-left: 7px; border-right: 1px solid #222; font-size: 7px; color: #aaa; }
.callbar button { position: relative; width: 28px; }
.callbar svg { width: 12px; height: 12px; }
.callbar .time svg { width: 10px; height: 10px; }
.callbar .off { color: #999; }
.callbar .deep { background: #2d3133; }
.callbar .sel { background: linear-gradient(#34375c, #3d3f66 60%, #55589b); }
.callbar .red { background: #9c3047; }
.dot::after { content: ""; position: absolute; right: 7px; top: 6px; width: 5px; height: 5px; border-radius: 50%; background: #f0703a; }

.roster { display: flex; height: 50px; padding-left: 41px; background: #1b1b1b; }
.roster ul { display: flex; flex: 1; align-items: center; margin: 0; padding: 0; list-style: none; }
.roster li { display: flex; flex: 1; justify-content: center; }
.ava { display: flex; align-items: center; justify-content: center; width: 23px; height: 23px; border-radius: 50%; font-size: 10px; }
.ava svg { width: 12px; height: 12px; }
.big { width: 33px; height: 33px; font-size: 14px; }
.plus { background: #6264a7; color: #fff; font-size: 7px; }
.stone { background: #e8dedb; color: #75625b; }
.mauve { background: #ecd3e2; color: #8a4f75; }
.pink { background: #f6d3df; color: #944362; }
.lilac { background: #e1ddee; color: #5e5688; }
.tan { background: #f6e6c9; color: #8b6a2b; }
.sand { background: #fdebc6; color: #ab8833; }
.sage { background: #cfe2d9; color: #45705f; }
.mint { background: #d1ecdd; color: #3f7b60; }
.anon { background: #8f8f8f; color: #e4e4e4; }
.sky { width: 25px; height: 25px; border: 2px solid #6b70c4; background: #c8d5ea; color: #456292; }
.self { display: flex; flex-direction: column; align-items: center; justify-content: flex-end; width: 96px; background: radial-gradient(circle at 50% 50%, #666aa5 12px, #38364a 32px, #2d2c33 46px); color: #fff; }
.selfname { align-self: flex-start; padding-left: 8px; font-size: 7px; line-height: 9px; margin-top: 3px; }

/* download shelf */
.downloads { display: flex; align-items: center; height: 27px; padding: 0 6px 0 2px; background: #fff; border-top: 1px solid #bbb; color: #555; font-size: 7px; }
.dl { display: flex; align-items: center; gap: 6px; width: 121px; height: 19px; padding: 0 8px 0 9px; border-right: 1px solid #ddd; }
.dl span { flex: 1; white-space: nowrap; }
.dl svg { width: 9px; height: 9px; }
.all { width: 49px; height: 16px; margin: 0 5px 0 auto; border: 1px solid #ddd; border-radius: 2px; }

/* taskbar */
.bar7 { display: flex; align-items: center; height: 21px; background: linear-gradient(90deg, #0b2f6c, #0c3c8a 10%, #0c3c8a 60%, #3f639d 72%, #34568f); color: #fff; }
.start { width: 29px; }
.start svg { width: 20px; height: 20px; }
.grip { width: 5px; height: 16px; margin: 0 2px; background: radial-gradient(circle, rgba(0,0,0,.45) 1px, transparent 1px) 0 0 / 3px 3px; }
.apps7 { display: flex; gap: 3px; flex: 1; margin-left: 3px; }
.apps7 span { display: flex; align-items: center; justify-content: center; width: 30px; height: 20px; }
.apps7 svg { width: 17px; height: 17px; }
.open { border: 1px solid #6d89b8; border-radius: 2px; background: linear-gradient(#5876a6, #2f528e); }
.now { background: linear-gradient(#bccbe0, #7e9bc6); }
.addr { padding-right: 3px; font-size: 7px; }
.combo { position: relative; display: flex; width: 134px; height: 13px; background: #fff; }
.combo input { width: 100%; border: 0; padding: 0 2px; background: #fff; font-size: 8px; }
.combo i { position: absolute; right: 2px; top: 1px; color: #000; font-style: normal; }
.go { width: 13px; height: 13px; margin: 0 2px 0 1px; background: #fff; }
.ime, .tray7 { display: flex; align-items: center; }
.ime { gap: 1px; margin-left: 3px; }
.ime svg { width: 9px; height: 9px; }
.key { display: flex; align-items: center; justify-content: center; width: 10px; height: 12px; background: #6484b5; font-size: 9px; }
.caps { padding-left: 3px; font-size: 4px; line-height: 6px; white-space: nowrap; }
.tray7 { gap: 4px; margin-left: 7px; }
.tray7 svg { width: 9px; height: 9px; }
.bar7 time { width: 52px; text-align: center; font-size: 7px; line-height: 9px; }
.desk { width: 7px; height: 21px; background: #6684b4; border-left: 1px solid #213d70; }
```
